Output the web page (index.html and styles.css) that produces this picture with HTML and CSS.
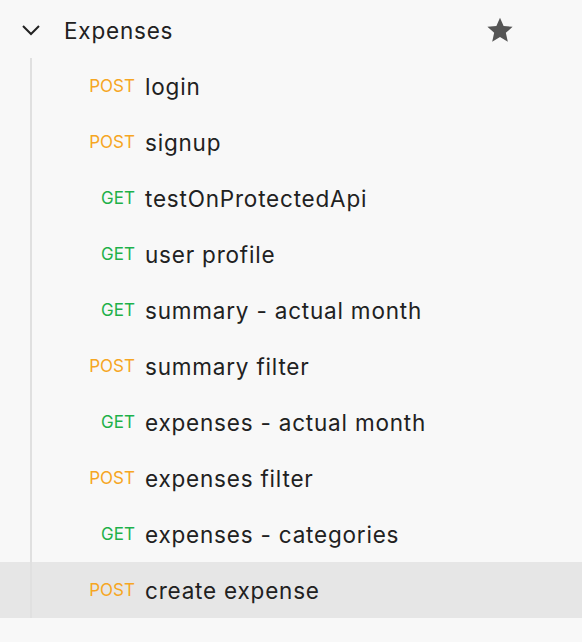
FILE: index.html
```html
<!DOCTYPE html>
<html>
<head>
<meta charset="utf-8">
<link rel="stylesheet" href="styles.css">
</head>
<body>
<div class="tree">
  <div class="folder">
    <svg class="chevron" width="20" height="14" viewBox="0 0 20 14"><path d="M2 3 L10 11 L18 3" fill="none" stroke="#222" stroke-width="2"/></svg>
    <span class="folder-name">Expenses</span>
    <svg class="star" width="28" height="28" viewBox="0 0 24 24"><path d="M12 1.5 L15.1 8.6 L22.8 9.3 L17 14.4 L18.7 22 L12 18 L5.3 22 L7 14.4 L1.2 9.3 L8.9 8.6 Z" fill="#555"/></svg>
  </div>
  <div class="items">
    <div class="item"><span class="method post">POST</span><span class="name">login</span></div>
    <div class="item"><span class="method post">POST</span><span class="name">signup</span></div>
    <div class="item"><span class="method get">GET</span><span class="name">testOnProtectedApi</span></div>
    <div class="item"><span class="method get">GET</span><span class="name">user profile</span></div>
    <div class="item"><span class="method get">GET</span><span class="name">summary - actual month</span></div>
    <div class="item"><span class="method post">POST</span><span class="name">summary filter</span></div>
    <div class="item"><span class="method get">GET</span><span class="name">expenses - actual month</span></div>
    <div class="item"><span class="method post">POST</span><span class="name">expenses filter</span></div>
    <div class="item"><span class="method get">GET</span><span class="name">expenses - categories</span></div>
    <div class="item active"><span class="method post">POST</span><span class="name">create expense</span></div>
  </div>
</div>
</body>
</html>
```

FILE: styles.css
```css
html, body {
  margin: 0;
  padding: 0;
  background: #f8f8f8;
  font-family: Inter, "Noto Sans", sans-serif;
  color: #212121;
}
.tree {
  padding-top: 2px;
}
.folder {
  height: 56px;
  display: flex;
  align-items: center;
  padding-left: 21px;
}
.chevron {
  display: block;
}
.folder-name {
  margin-left: 23px;
  font-size: 22.5px;
  letter-spacing: 0.8px;
  flex: 1;
}
.star {
  display: block;
  margin-right: 68px;
}
.item {
  height: 56px;
  display: flex;
  align-items: center;
  position: relative;
}
.items {
  position: relative;
}
.items::before {
  content: "";
  position: absolute;
  left: 30px;
  top: 0;
  bottom: 0;
  width: 2px;
  background: #e0e0e0;
  z-index: 1;
}
.item.active {
  background: #e6e6e6;
}
.method {
  width: 135px;
  text-align: right;
  font-size: 17px;
  box-sizing: border-box;
}
.post { color: #f6a623; }
.get { color: #1eb14a; }
.name {
  margin-left: 10px;
  font-size: 22.5px;
  letter-spacing: 0.8px;
}
```
